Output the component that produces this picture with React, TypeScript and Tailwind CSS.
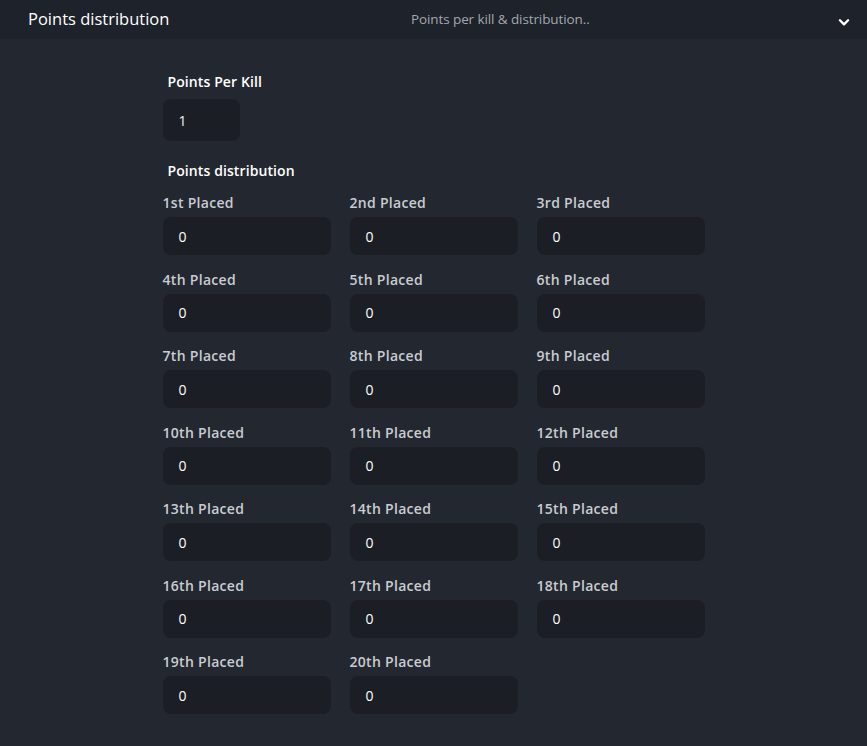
import React from "react";

const places = Array.from({ length: 20 }, (_, i) => {
  const n = i + 1;
  const s =
    n % 10 === 1 && n !== 11 ? "st" : n % 10 === 2 && n !== 12 ? "nd" : n % 10 === 3 && n !== 13 ? "rd" : "th";
  return `${n}${s} Placed`;
});

export default function App() {
  return (
    <div
      className="min-h-[746px] w-full bg-[#232830] text-white"
      style={{ fontFamily: '"Open Sans", "Liberation Sans", sans-serif' }}
    >
      <div className="flex h-[39px] items-center bg-[#1e222a] pl-[28px] pr-[16px]">
        <div className="w-[383px] text-[16.5px] leading-none text-white">Points distribution</div>
        <div className="flex-1 text-[13.5px] tracking-[-0.1px] leading-none text-[#a3a7ae]">
          Points per kill &amp; distribution..
        </div>
        <svg width="14" height="14" viewBox="0 0 24 24" fill="none" stroke="white" strokeWidth="4" strokeLinecap="round" strokeLinejoin="round" className="mt-[4px]">
          <path d="M5 9l7 7 7-7" />
        </svg>
      </div>
      <div className="mx-auto w-[542px] pb-[32px] pt-[33px]">
        <div className="pl-[5px] text-[14px] font-semibold tracking-[0.1px] leading-[20px] text-white">Points Per Kill</div>
        <div className="mt-[7px] flex h-[42px] w-[77px] items-center rounded-[8px] bg-[#1b1e24] pl-[16px] text-[14px] text-[#eef3ff]">
          1
        </div>
        <div className="mt-[20px] pl-[5px] text-[14px] font-semibold tracking-[0.1px] leading-[20px] text-white">
          Points distribution
        </div>
        <div className="mt-[12px] grid grid-cols-3 gap-x-[19px] gap-y-[14.5px]">
          {places.map((p) => (
            <div key={p} className="flex flex-col">
              <div className="text-[14px] font-semibold tracking-[0.3px] leading-[20px] text-[#c9ccd1]">{p}</div>
              <div className="mt-[4px] flex h-[38px] items-center rounded-[8px] bg-[#1b1e24] pl-[16px] text-[14px] text-white">
                0
              </div>
            </div>
          ))}
        </div>
      </div>
    </div>
  );
}
